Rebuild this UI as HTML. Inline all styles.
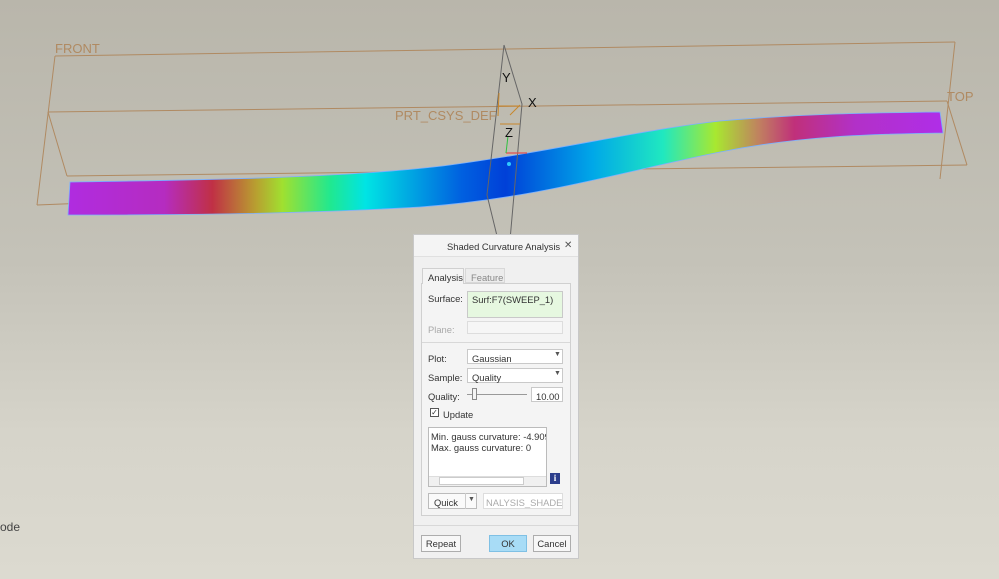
<!DOCTYPE html>
<html><head><meta charset="utf-8"><style>
*{margin:0;padding:0;box-sizing:border-box}
body{width:999px;height:579px;overflow:hidden;position:relative;font-family:"Liberation Sans",sans-serif;background:linear-gradient(#b9b6ab 0%,#c4c2b8 45%,#d6d4ca 75%,#dcdad0 100%)}
.abs{position:absolute}
.dlg{position:absolute;left:413px;top:234px;width:166px;height:325px;background:#f0f0f0;border:1px solid #c8c8c8;font-size:9.4px;color:#333}
.t{position:absolute;white-space:nowrap}
.box{position:absolute;background:#fff;border:1px solid #c9c9c9}
.btn{position:absolute;border:1px solid #adadad;background:#f7f7f7;text-align:center;line-height:15px;height:17px}
</style></head><body>
<svg class="abs" style="left:0;top:0" width="999" height="579">
<defs><linearGradient id="g" x1="68" x2="943" gradientUnits="userSpaceOnUse" y1="0" y2="0">
<stop offset="0" stop-color="#b02ce0"/><stop offset="0.11" stop-color="#b52cc0"/><stop offset="0.165" stop-color="#c03045"/><stop offset="0.215" stop-color="#b8a030"/><stop offset="0.245" stop-color="#a0e030"/><stop offset="0.3" stop-color="#20e890"/><stop offset="0.34" stop-color="#00e4e4"/><stop offset="0.45" stop-color="#0060e0"/><stop offset="0.5" stop-color="#0040d8"/><stop offset="0.6" stop-color="#00a8e8"/><stop offset="0.68" stop-color="#20e8c0"/><stop offset="0.74" stop-color="#a8e830"/><stop offset="0.79" stop-color="#c08060"/><stop offset="0.83" stop-color="#c0307a"/><stop offset="0.9" stop-color="#b230c8"/><stop offset="1" stop-color="#b02ee8"/></linearGradient></defs>
<g stroke="#b08a62" stroke-width="1" fill="none">
<line x1="55" y1="56" x2="955" y2="42"/>
<line x1="55" y1="56" x2="37" y2="205"/>
<line x1="48" y1="112" x2="947" y2="101"/>
<line x1="48" y1="112" x2="67" y2="176"/>
<line x1="67" y1="176" x2="967" y2="165"/>
<line x1="37" y1="205" x2="420" y2="190"/>
<line x1="955" y1="42" x2="940" y2="179"/>
<line x1="947" y1="101" x2="967" y2="165"/>
<line x1="520" y1="105" x2="510" y2="115" stroke="#c8862a"/>
</g>
<path d="M70,182 C200,180 350,178 450,165 C560,150 640,130 720,121 C800,114 860,113 940,112 L943,133 C870,134 800,136 720,152 C620,172 540,198 420,207 C300,214 180,215 68,215 Z" fill="url(#g)" stroke="#7ab0ff" stroke-width="0.8"/>
<g stroke="#666" stroke-width="1" fill="none">
<polyline points="504,45 522,104 510,240"/>
<polyline points="504,45 487,195 498,240"/>
</g>
<line x1="500" y1="124" x2="520" y2="124" stroke="#c8862a"/>
<line x1="498" y1="106" x2="520" y2="106" stroke="#c8862a"/>
<line x1="499" y1="93" x2="498" y2="116" stroke="#c8862a"/>
<line x1="506" y1="153" x2="527" y2="153" stroke="#e05050" stroke-width="1.2"/>
<line x1="506" y1="153" x2="508" y2="136" stroke="#30c040"/>
<circle cx="509" cy="164" r="2" fill="#30c8ff"/>
<g fill="#b08a62" font-family="Liberation Sans" font-size="13">
<text x="55" y="53">FRONT</text>
<text x="947" y="101">TOP</text>
<text x="395" y="120">PRT_CSYS_DEF</text>
</g>
<g fill="#111" font-family="Liberation Sans" font-size="13">
<text x="502" y="82">Y</text><text x="528" y="107">X</text><text x="505" y="137">Z</text>
</g>
</svg>
<div class="t" style="left:0;top:520px;font-size:12px;color:#444">ode</div>
<div class="dlg">
<div style="position:absolute;left:0;top:0;width:164px;height:22px;background:#f4f4f4;border-bottom:1px solid #e0e0e0"></div>
<div class="t" style="left:33px;top:6px;color:#333">Shaded Curvature Analysis</div>
<div class="t" style="left:150px;top:5px;font-size:10px;color:#555">✕</div>
<div style="position:absolute;left:7px;top:48px;width:150px;height:233px;border:1px solid #d0d0d0;background:#f4f4f4"></div>
<div style="position:absolute;left:8px;top:33px;width:42px;height:16px;background:#f4f4f4;border:1px solid #d0d0d0;border-bottom:none"></div>
<div class="t" style="left:14px;top:37px">Analysis</div>
<div style="position:absolute;left:51px;top:33px;width:40px;height:15px;border:1px solid #d8d8d8;background:#ececec"></div>
<div class="t" style="left:57px;top:37px;color:#888">Feature</div>
<div class="t" style="left:14px;top:58px">Surface:</div>
<div class="box" style="left:53px;top:56px;width:96px;height:27px;background:#e6f8e0"></div>
<div class="t" style="left:58px;top:59px">Surf:F7(SWEEP_1)</div>
<div class="t" style="left:14px;top:89px;color:#aaa">Plane:</div>
<div class="box" style="left:53px;top:86px;width:96px;height:13px;background:#f6f6f6;border-color:#ddd"></div>
<div style="position:absolute;left:8px;top:107px;width:148px;border-top:1px solid #d8d8d8"></div>
<div class="t" style="left:14px;top:118px">Plot:</div>
<div class="box" style="left:53px;top:114px;width:96px;height:15px"></div>
<div class="t" style="left:58px;top:118px">Gaussian</div>
<div class="t" style="left:140px;top:116px;font-size:7px;color:#555">▼</div>
<div class="t" style="left:14px;top:137px">Sample:</div>
<div class="box" style="left:53px;top:133px;width:96px;height:15px"></div>
<div class="t" style="left:58px;top:137px">Quality</div>
<div class="t" style="left:140px;top:135px;font-size:7px;color:#555">▼</div>
<div class="t" style="left:14px;top:156px">Quality:</div>
<div style="position:absolute;left:53px;top:159px;width:60px;border-top:1px solid #999"></div>
<div style="position:absolute;left:58px;top:153px;width:5px;height:12px;border:1px solid #888;background:#f4f4f4"></div>
<div class="box" style="left:117px;top:152px;width:32px;height:15px"></div>
<div class="t" style="left:122px;top:156px">10.00</div>
<div style="position:absolute;left:16px;top:173px;width:9px;height:9px;border:1px solid #555;background:#fff;font-size:8px;line-height:7px;text-align:center">✓</div>
<div class="t" style="left:29px;top:174px">Update</div>
<div class="box" style="left:14px;top:192px;width:119px;height:60px;border-color:#bbb"></div>
<div class="t" style="left:17px;top:196px;width:115px;overflow:hidden">Min. gauss curvature: -4.90921e</div>
<div class="t" style="left:17px;top:207px">Max. gauss curvature: 0</div>
<div style="position:absolute;left:15px;top:241px;width:117px;height:10px;background:#f0f0f0;border-top:1px solid #ddd"></div>
<div style="position:absolute;left:25px;top:242px;width:85px;height:8px;background:#fff;border:1px solid #ccc"></div>
<div style="position:absolute;left:136px;top:238px;width:10px;height:11px;background:#2c3e8c;color:#fff;font-size:9px;font-weight:bold;text-align:center;line-height:11px;font-family:'Liberation Serif',serif">i</div>
<div class="box" style="left:14px;top:258px;width:49px;height:16px;background:#fafafa;border-color:#bbb"></div>
<div style="position:absolute;left:51px;top:258px;border-left:1px solid #ccc;height:16px"></div>
<div class="t" style="left:20px;top:262px">Quick</div>
<div class="t" style="left:54px;top:261px;font-size:7px;color:#555">▼</div>
<div class="box" style="left:69px;top:258px;width:80px;height:16px;border-color:#ddd"></div>
<div class="t" style="left:72px;top:262px;color:#aaa;width:76px;overflow:hidden">NALYSIS_SHADED_1</div>
<div style="position:absolute;left:0;top:290px;width:164px;border-top:1px solid #d8d8d8"></div>
<div class="btn" style="left:7px;top:300px;width:40px">Repeat</div>
<div class="btn" style="left:75px;top:300px;width:38px;background:#a8dcf6;border-color:#7fc0e4">OK</div>
<div class="btn" style="left:119px;top:300px;width:38px">Cancel</div>
</div>
</body></html>
